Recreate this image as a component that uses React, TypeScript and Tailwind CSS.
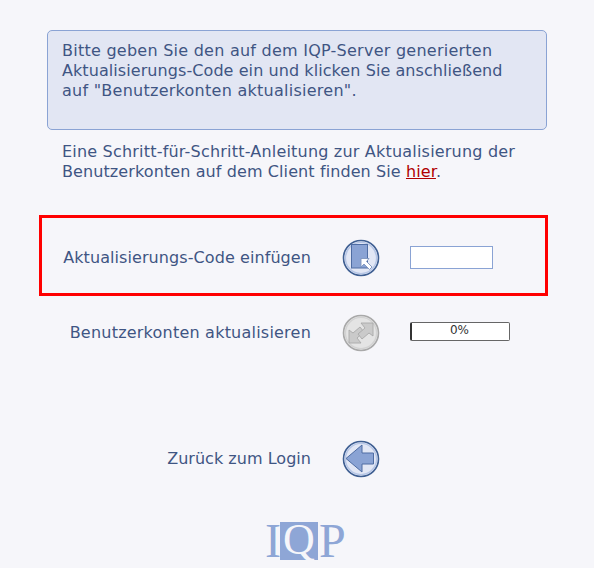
const textFont = "font-['DejaVu_Sans',Verdana,sans-serif]";

function CircleIcon({ grey, children }: { grey?: boolean; children: React.ReactNode }) {
  const ring = grey ? '#a9a9a9' : '#3f5f92';
  const fill = grey ? '#e4e4e4' : '#e2e7f5';
  const inner = grey ? '#d2d2d2' : '#b6c6e6';
  return (
    <svg width="38" height="38" viewBox="0 0 38 38" className="shrink-0">
      <circle cx="19" cy="19" r="17.5" fill={fill} stroke={ring} strokeWidth="1.6" />
      <circle cx="19" cy="19" r="15.6" fill="none" stroke={inner} strokeWidth="1.4" />
      {children}
    </svg>
  );
}

function Row({ label, labelClass, icon, children }: { label: string; labelClass: string; icon: React.ReactNode; children: React.ReactNode }) {
  return (
    <div className="flex items-center">
      <span className={`w-[269px] text-right ${labelClass}`}>{label}</span>
      <div className="ml-[31px]">{icon}</div>
      <div className="ml-[30px]">{children}</div>
    </div>
  );
}

export default function App() {
  return (
    <div className={`w-[594px] h-[568px] overflow-hidden bg-[#f6f6fa] text-[#3f5583] text-[16px] leading-[20px] ${textFont}`}>
      <div className="pt-[30px] pl-[47px] w-[547px]">
        <div className="w-[500px] h-[100px] bg-[#e2e6f3] border border-[#8aa3d4] rounded-[5px] pl-[14px] pt-[10px]">
          <div className="tracking-[0.25px]">Bitte geben Sie den auf dem IQP-Server generierten</div>
          <div className="tracking-[0.075px]">Aktualisierungs-Code ein und klicken Sie anschließend</div>
          <div className="tracking-[0.26px]">auf "Benutzerkonten aktualisieren".</div>
        </div>
        <div className="pl-[15px] mt-[12px]">
          <div className="tracking-[0.2px]">Eine Schritt-für-Schritt-Anleitung zur Aktualisierung der</div>
          <div className="tracking-[0.1px]">
            Benutzerkonten auf dem Client finden Sie{' '}
            <a className="text-[#b00000] underline">hier</a>.
          </div>
        </div>
      </div>

      <div className="mt-[33px] ml-[39px] w-[509px] h-[81px] border-[3px] border-[#ff0000] flex items-center pt-[4px]">
        <Row
          label="Aktualisierungs-Code einfügen"
          labelClass="tracking-[0.08px]"
          icon={
            <CircleIcon>
              <rect x="9.5" y="5.5" width="16" height="23.5" fill="#8aa3d4" stroke="#4f6da3" strokeWidth="1" />
              <path d="M19 19.5 L27 19.5 L24.5 22.5 L30 28 L27.5 30.5 L22 25 L19 28 Z" fill="#ffffff" stroke="#7d93bd" strokeWidth="0.9" />
            </CircleIcon>
          }
        >
          <div className="w-[83px] h-[23px] bg-white border border-[#8aa3d4]" />
        </Row>
      </div>

      <div className="mt-[18px] ml-[42px]">
        <Row
          label="Benutzerkonten aktualisieren"
          labelClass="tracking-[0.22px]"
          icon={
            <CircleIcon grey>
              <path d="M7 29 L7 16 L11 19 L18 13 L22 18 L15 24 L19 29 Z" fill="#cacaca" stroke="#a9a9a9" strokeWidth="0.9" />
              <path d="M31 9 L31 22 L27 19 L20 25 L16 20 L23 14 L19 9 Z" fill="#cacaca" stroke="#a9a9a9" strokeWidth="0.9" />
            </CircleIcon>
          }
        >
          <div className="mb-[3px] w-[100px] h-[19px] bg-white border border-[#666666] rounded-[2px] border-l-[2px] border-l-[#333333] pr-[2px] text-center text-[12px] leading-[15px] text-[#333333]">
            0%
          </div>
        </Row>
      </div>

      <div className="mt-[88px] ml-[42px]">
        <Row
          label="Zurück zum Login"
          labelClass="tracking-[0.03px]"
          icon={
            <CircleIcon>
              <path d="M4 18.5 L20 5 L20 13 L31.5 13 L31.5 24 L20 24 L20 32 Z" fill="#8aa3d4" stroke="#4f6da3" strokeWidth="1" />
            </CircleIcon>
          }
        >
          <div />
        </Row>
      </div>

      <div className="mt-[44px] ml-[265px] flex items-center h-[38px] text-[#8ea6d6] font-['Liberation_Serif',serif] text-[48px] leading-[38px]">
        <span className="w-[15px]">I</span>
        <span className="w-[38px] h-[38px] bg-[#8ea6d6] text-[#f6f6fa] text-center text-[44px] leading-[36px]">Q</span>
        <span className="ml-[1px]">P</span>
      </div>
    </div>
  );
}
